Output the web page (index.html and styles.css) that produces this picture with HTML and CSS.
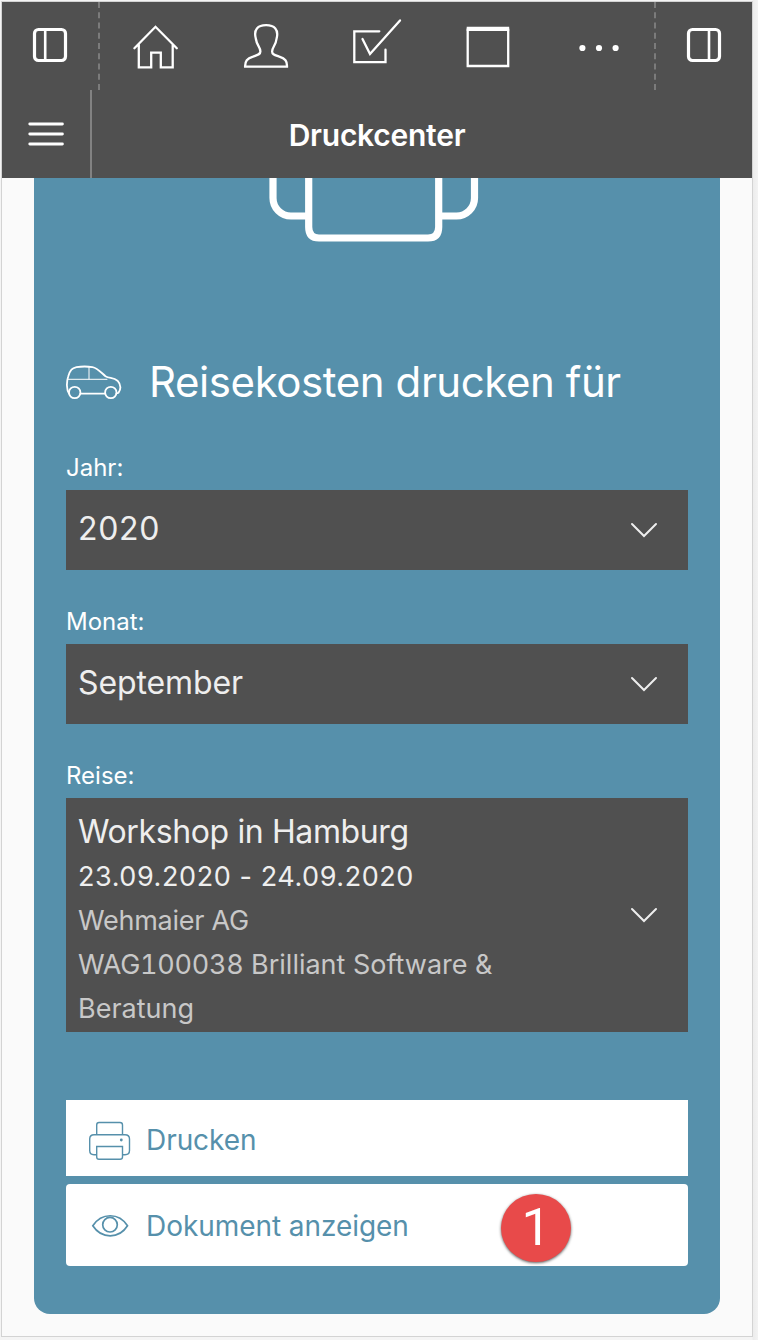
FILE: index.html
```html
<!DOCTYPE html>
<html lang="de">
<head>
<meta charset="utf-8">
<title>Druckcenter</title>
<link rel="stylesheet" href="styles.css">
</head>
<body>
<div class="frame">
  <header class="header">
    <div class="toolbar">
      <div class="side side-left">
        <svg class="icon" viewBox="22 18 56 56"><rect x="34.5" y="29.5" width="31" height="31" rx="4" stroke-width="3.2"/><path d="M45.2 30v30" stroke-width="2.6"/></svg>
      </div>
      <nav class="nav">
        <a class="nav-item"><svg class="icon" viewBox="127 18 56 56"><path d="M134.400 48.200 155.500 26.800 176.800 48.200M138.800 44.500V67.300H151.200V52.600H160.800V67.300H172.700V44.500"/></svg></a>
        <a class="nav-item"><svg class="icon" viewBox="238.200 18 56 56"><path d="M245.300 66.600H287.200C287.400 61 285.500 58.600 279.500 56.600C274.500 54.800 272.300 54.300 272.300 51.500C272.300 47 276 46 276.800 38.500C279.200 29.500 274.500 25.200 266.300 25.200C258 25.200 253.600 29.500 256 38.500C257 46 260.600 47 260.600 51.500C260.600 54.300 258.200 54.800 253.200 56.600C247.200 58.600 245.200 61 245.300 66.600Z"/></svg></a>
        <a class="nav-item"><svg class="icon" viewBox="349 18 56 56"><path d="M379.300 31.300H354.300V62.200H385.500V49.700M362.500 39 370 54 400 20.400"/></svg></a>
        <a class="nav-item"><svg class="icon" viewBox="460 18 56 56"><path d="M467.700 29.200V66H508.200V29.200"/><path d="M466.700 28.900H509.200" stroke-width="4.400" stroke-linecap="butt"/></svg></a>
        <a class="nav-item"><svg class="icon dots" viewBox="570.600 18 56 56"><circle cx="582" cy="48" r="3.100"/><circle cx="598.600" cy="48" r="3.100"/><circle cx="615.200" cy="48" r="3.100"/></svg></a>
      </nav>
      <div class="side side-right">
        <svg class="icon" viewBox="676 18 56 56"><rect x="688.5" y="29.5" width="31" height="31" rx="4" stroke-width="3.2"/><path d="M709 30v30" stroke-width="2.6"/></svg>
      </div>
    </div>
    <div class="titlebar">
      <button class="menu"><svg class="icon" viewBox="18 106 56 56"><path d="M29.800 124H62.400M29.800 134H62.400M29.800 144H62.400" stroke-width="2.900"/></svg></button>
      <h1 class="title">Druckcenter</h1>
    </div>
  </header>

  <main class="panel">
    <svg class="hero" viewBox="0 0 210 64"><path d="M4 -4V20A18 18 0 0 0 22 38H38M205.500 -4V20A18 18 0 0 1 187.500 38H171M39.700 -4V49Q39.700 60 50 60H159Q169.700 60 169.700 49V-4"/></svg>

    <div class="heading">
      <svg class="car" viewBox="65 364 57 37"><path d="M69 393.500C66.500 390 66.300 382 68.200 376.500C70.300 369.500 72 368.300 76.500 367.200C82 366.200 88 366.400 92.500 367.100C97.500 368 102 373.500 105.500 376.200C109 378.700 113.500 377.200 117.500 380.700C121 384.500 121 389 118.500 392.800L116.500 393.500M80.500 393.700H105"/><circle cx="74.700" cy="392.500" r="5.700"/><circle cx="110.800" cy="392.500" r="5.700"/><path class="thin" d="M67.500 379.300H107M89 367V379"/></svg>
      <h2 class="heading-text">Reisekosten drucken für</h2>
    </div>

    <section class="field">
      <label class="label">Jahr:</label>
      <div class="select"><span class="value value-num">2020</span><svg class="chevron" viewBox="0 0 28 16"><path d="M2 2 14 14 26 2"/></svg></div>
    </section>
    <section class="field">
      <label class="label">Monat:</label>
      <div class="select"><span class="value value-month">September</span><svg class="chevron" viewBox="0 0 28 16"><path d="M2 2 14 14 26 2"/></svg></div>
    </section>
    <section class="field">
      <label class="label">Reise:</label>
      <div class="select select-trip">
        <div class="trip">
          <div class="trip-name">Workshop in Hamburg</div>
          <div class="trip-date">23.09.2020 - 24.09.2020</div>
          <div class="trip-info trip-client">Wehmaier AG</div>
          <div class="trip-info"><span class="order-no">WAG100038</span> <span>Brilliant Software &amp;</span></div>
          <div class="trip-info">Beratung</div>
        </div>
        <svg class="chevron" viewBox="0 0 28 16"><path d="M2 2 14 14 26 2"/></svg>
      </div>
    </section>

    <div class="actions">
      <button class="action action-print">
        <svg class="action-icon" viewBox="88 1118 44 44"><path d="M96.700 1134.500V1125Q96.700 1122.500 99 1122.500H120Q122.500 1122.500 122.500 1125V1134.500M96.700 1154.700H94Q89.700 1154.700 89.700 1150.500V1139Q89.700 1134.700 94 1134.700H125Q129.500 1134.700 129.500 1139V1150.500Q129.500 1154.700 125 1154.700H122.500M96.700 1146.500H122.500V1157Q122.500 1159.300 120 1159.300H99Q96.700 1159.300 96.700 1157Z"/><circle class="dot" cx="121.300" cy="1140" r="1.400"/></svg>
        <span>Drucken</span>
      </button>
      <button class="action action-show">
        <svg class="action-icon eye" viewBox="88 1204 44 44"><path d="M92.800 1225.800C101.500 1212.400 119 1212.400 127.500 1225.800C119 1239.200 101.500 1239.200 92.800 1225.800Z"/><circle cx="110" cy="1224.700" r="7.300"/></svg>
        <span>Dokument anzeigen</span>
        <span class="badge">1</span>
      </button>
    </div>
  </main>
</div>
</body>
</html>
```
FILE: styles.css
```css
* { box-sizing: border-box; }

body {
  margin: 0;
  height: 1340px;
  padding: 1px 0 0 1px;
  overflow: hidden;
  background: linear-gradient(to right, #f4f4f4 752px, #ececec 753px, #f3f3f3 758px);
  font-family: Inter, "Liberation Sans", sans-serif;
  color: #fff;
}

h1, h2 { margin: 0; }
button { margin: 0; border: 0; border-radius: 0; padding: 0; font: inherit; }
svg { display: block; fill: none; stroke: currentColor; stroke-linecap: round; }

.frame {
  width: 752px;
  height: 1336px;
  border: 1px solid #d3d3d3;
  background: #fafafa;
}

.header { background: #505050; height: 176px; }
.toolbar { display: flex; height: 88px; }
.side { width: 98px; display: flex; align-items: center; }
.side-left { padding-left: 20px; border-right: 2px dashed #7b7b7b; }
.side-right { padding-left: 20px; border-left: 2px dashed #7b7b7b; }
.nav { flex: 1; display: flex; }
.nav-item { flex: 1; display: flex; align-items: center; justify-content: center; }
.icon { width: 56px; height: 56px; stroke-width: 2.3; }
.dots { fill: #fff; stroke: none; }

.titlebar { display: flex; height: 88px; }
.menu {
  width: 90px;
  padding-left: 16px;
  background: none;
  color: #fff;
  border-right: 2px solid #828282;
}
.title {
  flex: 1;
  padding-right: 90px;
  text-align: center;
  font-size: 30px;
  font-weight: 600;
  letter-spacing: -.25px;
  line-height: 90px;
}

.panel {
  width: 686px;
  height: 1136px;
  margin-left: 32px;
  padding: 0 32px;
  border-radius: 0 0 16px 16px;
  background: #5690ab;
}
.hero { width: 210px; height: 64px; margin-left: 203px; stroke-width: 7.2; stroke-linecap: butt; }

.heading { display: flex; align-items: center; height: 60px; margin-top: 110px; }
.car { width: 57px; height: 37px; margin: 1px 0 0 -1px; stroke-width: 1.8; }
.thin { stroke-width: 1; }
.heading-text {
  margin-left: 27px;
  font-size: 42px;
  font-weight: 400;
  letter-spacing: -.42px;
  line-height: 60px;
  white-space: nowrap;
}

.field { margin-bottom: 36px; }
.label { display: block; height: 38px; font-size: 24px; line-height: 32px; }
.heading + .field { margin-top: 40px; }

.select {
  display: flex;
  align-items: center;
  justify-content: space-between;
  height: 80px;
  padding: 0 30px 0 12px;
  background: #505050;
  color: #eee;
}
.value { font-size: 32px; padding-bottom: 3px; }
.value-num { letter-spacing: .7px; }
.value-month { letter-spacing: -.1px; }
.chevron { width: 28px; height: 16px; stroke-width: 2; }
.select-trip { height: 234px; }
.trip { width: 430px; padding-top: 9px; line-height: 44px; font-size: 27px; }
.trip-name { font-size: 32px; line-height: 46px; letter-spacing: -.38px; }
.trip-date { letter-spacing: .58px; }
.trip-info { color: #c8c8c8; }
.trip-client { letter-spacing: -.25px; }
.order-no { font-variant-numeric: tabular-nums; letter-spacing: -.28px; }

.actions { display: flex; flex-direction: column; gap: 8px; margin-top: 68px; }
.action {
  position: relative;
  display: flex;
  align-items: center;
  gap: 14px;
  height: 76px;
  padding: 4px 0 0 22px;
  background: #fff;
  color: #5690ab;
  font-size: 28px;
  letter-spacing: -.06px;
}
.action-show { height: 82px; padding-top: 2px; border-radius: 4px; }
.action-icon { width: 44px; height: 44px; stroke-width: 1.4; }
.eye { stroke-width: 1.7; }
.dot { fill: #5690ab; stroke: none; }
.badge {
  position: absolute;
  left: 435px;
  top: 10px;
  width: 70px;
  height: 68px;
  border-radius: 50%;
  background: #e84a4a;
  box-shadow: 0 1px 3px rgba(0, 0, 0, .65);
  color: #fff;
  font-family: Roboto, sans-serif;
  font-size: 52px;
  line-height: 68px;
  text-align: center;
}
```
